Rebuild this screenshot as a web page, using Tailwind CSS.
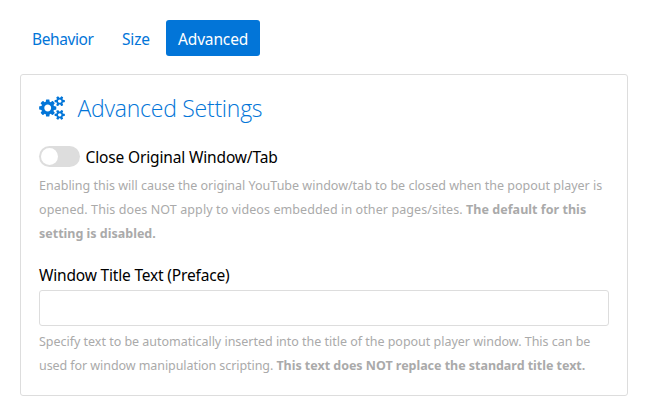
<!DOCTYPE html>
<html lang="en">
<head>
<meta charset="utf-8">
<title>Settings</title>
<script src="https://cdn.jsdelivr.net/npm/@tailwindcss/browser@4"></script>
</head>
<body class="bg-white p-5 pb-0 font-['Noto_Sans','Open_Sans',sans-serif] text-[15.5px] leading-6 tracking-[-0.15px] text-black">
  <nav class="flex h-9 gap-1 whitespace-nowrap text-[#0275d8]">
    <a class="w-[86px] rounded-[3px] px-3 pt-[7px] tracking-[-0.4px]">Behavior</a>
    <a class="w-[52px] rounded-[3px] px-3 pt-[7px]">Size</a>
    <a class="w-[94px] rounded-[3px] bg-[#0275d8] px-3 pt-[7px] text-white">Advanced</a>
  </nav>

  <main class="mt-[18px] h-[322px] w-[608px] rounded-[3px] border border-[#dddddd] px-[18px] pt-[17px]">
    <h1 class="flex h-8 items-start text-[#0275d8]">
      <svg class="mt-[3.5px] mr-[12.5px] h-6 w-[26px] shrink-0" viewBox="0 0 1920 1792" fill="currentColor" aria-hidden="true"><path d="M896 896q0-106-75-181t-181-75-181 75-75 181 75 181 181 75 181-75 75-181zm768 512q0-52-38-90t-90-38-90 38-38 90q0 53 37.5 90.5t90.5 37.5 90.5-37.5 37.5-90.5zm0-1024q0-52-38-90t-90-38-90 38-38 90q0 53 37.5 90.5t90.5 37.5 90.5-37.5 37.5-90.5zm-384 421v185q0 10-7 19.5t-16 10.5l-155 24q-11 35-32 76 34 48 90 115 7 11 7 20 0 12-7 19-23 30-82.5 89.5t-78.5 59.5q-11 0-21-7l-115-90q-37 19-77 31-11 108-23 155-7 24-30 24h-186q-11 0-20-7.5t-10-17.5l-23-153q-34-10-75-31l-118 89q-7 7-20 7-11 0-21-8-144-133-144-160 0-9 7-19 10-14 41-53t47-61q-23-44-35-82l-152-24q-10-1-17-9.5t-7-19.5v-185q0-10 7-19.5t16-10.5l155-24q11-35 32-76-34-48-90-115-7-11-7-20 0-12 7-20 22-30 82-89t79-59q11 0 21 7l115 90q34-18 77-32 11-108 23-154 7-24 30-24h186q11 0 20 7.5t10 17.5l23 153q34 10 75 31l118-89q8-7 20-7 11 0 21 8 144 133 144 160 0 8-7 19-12 16-42 54t-45 60q23 48 34 82l152 23q10 2 17 10.5t7 19.5zm640 533v140q0 16-149 31-12 27-30 52 51 113 51 138 0 4-4 7-122 71-124 71-8 0-46-47t-52-68q-20 2-30 2t-30-2q-14 21-52 68t-46 47q-2 0-124-71-4-3-4-7 0-25 51-138-18-25-30-52-149-15-149-31v-140q0-16 149-31 13-29 30-52-51-113-51-138 0-4 4-7 4-2 35-20t59-34 30-16q8 0 46 46.5t52 67.5q20-2 30-2t30 2q51-71 92-112l6-2q4 0 124 70 4 3 4 7 0 25-51 138 17 23 30 52 149 15 149 31zm0-1024v140q0 16-149 31-12 27-30 52 51 113 51 138 0 4-4 7-122 71-124 71-8 0-46-47t-52-68q-20 2-30 2t-30-2q-14 21-52 68t-46 47q-2 0-124-71-4-3-4-7 0-25 51-138-18-25-30-52-149-15-149-31v-140q0-16 149-31 13-29 30-52-51-113-51-138 0-4 4-7 4-2 35-20t59-34 30-16q8 0 46 46.5t52 67.5q20-2 30-2t30 2q51-71 92-112l6-2q4 0 124 70 4 3 4 7 0 25-51 138 17 23 30 52 149 15 149 31z"/></svg>
      <span class="whitespace-nowrap font-['Open_Sans',sans-serif] text-[23px] leading-8 font-light tracking-[-0.25px]">Advanced Settings</span>
    </h1>

    <label class="mt-[21px] flex h-6 items-start whitespace-nowrap">
      <span class="mt-px mr-[5.5px] flex h-[21px] w-[41px] items-center rounded-full bg-[#dddddd] p-[2px]"><span class="size-[17px] rounded-full bg-white"></span></span>
      <span>Close Original Window/Tab</span>
    </label>
    <p class="mt-[5px] whitespace-nowrap text-[12.5px] tracking-normal text-[#aaaaaa]">
      Enabling this will cause the original YouTube window/tab to be closed when the popout player is<br>
      <span class="tracking-[0.095px]">opened. This does NOT apply to videos embedded in other pages/sites. </span><b class="tracking-[0.04px]">The default for this</b><br>
      <b>setting is disabled.</b>
    </p>

    <label class="mt-[17px] block h-[27px] tracking-[-0.18px]" for="preface">Window Title Text (Preface)</label>
    <input id="preface" type="text" class="block h-9 w-full rounded-[3px] border border-[#dddddd] bg-white px-2 outline-none">
    <p class="mt-1 whitespace-nowrap text-[12.5px] tracking-normal text-[#aaaaaa]">
      <span class="tracking-[-0.02px]">Specify text to be automatically inserted into the title of the popout player window. This can be</span><br>
      <span class="tracking-[-0.07px]">used for window manipulation scripting. </span><b class="tracking-[-0.03px]">This text does NOT replace the standard title text.</b>
    </p>
  </main>
</body>
</html>
